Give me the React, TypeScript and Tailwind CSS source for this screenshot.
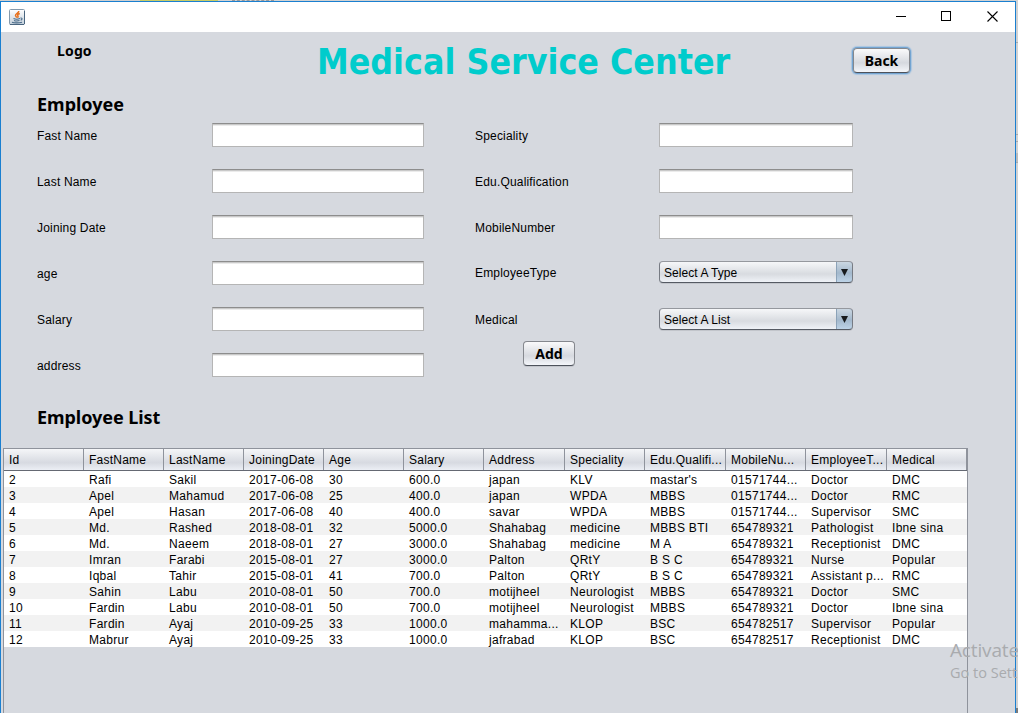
import React from "react";

const headers = ["Id", "FastName", "LastName", "JoiningDate", "Age", "Salary", "Address", "Speciality", "Edu.Qualifi...", "MobileNu...", "EmployeeT...", "Medical"];

const employees = [
  ["2", "Rafi", "Sakil", "2017-06-08", "30", "600.0", "japan", "KLV", "mastar's", "01571744...", "Doctor", "DMC"],
  ["3", "Apel", "Mahamud", "2017-06-08", "25", "400.0", "japan", "WPDA", "MBBS", "01571744...", "Doctor", "RMC"],
  ["4", "Apel", "Hasan", "2017-06-08", "40", "400.0", "savar", "WPDA", "MBBS", "01571744...", "Supervisor", "SMC"],
  ["5", "Md.", "Rashed", "2018-08-01", "32", "5000.0", "Shahabag", "medicine", "MBBS BTI", "654789321", "Pathologist", "Ibne sina"],
  ["6", "Md.", "Naeem", "2018-08-01", "27", "3000.0", "Shahabag", "medicine", "M A", "654789321", "Receptionist", "DMC"],
  ["7", "Imran", "Farabi", "2015-08-01", "27", "3000.0", "Palton", "QRtY", "B S C", "654789321", "Nurse", "Popular"],
  ["8", "Iqbal", "Tahir", "2015-08-01", "41", "700.0", "Palton", "QRtY", "B S C", "654789321", "Assistant p...", "RMC"],
  ["9", "Sahin", "Labu", "2010-08-01", "50", "700.0", "motijheel", "Neurologist", "MBBS", "654789321", "Doctor", "SMC"],
  ["10", "Fardin", "Labu", "2010-08-01", "50", "700.0", "motijheel", "Neurologist", "MBBS", "654789321", "Doctor", "Ibne sina"],
  ["11", "Fardin", "Ayaj", "2010-09-25", "33", "1000.0", "mahamma...", "KLOP", "BSC", "654782517", "Supervisor", "Popular"],
  ["12", "Mabrur", "Ayaj", "2010-09-25", "33", "1000.0", "jafrabad", "KLOP", "BSC", "654782517", "Receptionist", "DMC"],
];

const columns = "grid grid-cols-[80px_80px_80px_80px_80px_80px_81px_80px_81px_80px_81px_80px]";
const heading = "font-['Noto_Sans',sans-serif] font-bold";

function JavaIcon() {
  return (
    <svg width="16" height="16" viewBox="0 0 16 16" fill="none">
      <defs>
        <linearGradient id="tile" x1="0" y1="0" x2="0" y2="1">
          <stop offset="0" stopColor="#ffffff" />
          <stop offset="1" stopColor="#c3cfda" />
        </linearGradient>
      </defs>
      <rect x=".5" y=".5" width="15" height="15" rx="1" fill="url(#tile)" stroke="#8399ac" />
      <path d="M1 15.500h14M15.500 2v13" stroke="#49657f" />
      <path d="M9.800 2C10 4 6.300 4.600 6.500 6.500c.1 1 1.200 1.300 1.300 2.200M10.800 4.500C8 5.500 8.600 6.300 9 7c.3.6 0 1.200-.5 1.600" stroke="#e8701c" strokeWidth="1.500" />
      <path d="M4.500 9.500c1.500.7 5 .6 6.500.1M5 11.500c1.500.6 4 .6 5.500.1M11.500 9c2-.4 2 1.700.2 2.300M3 13.200c2 .9 7.500.8 10 0" stroke="#4a6b89" strokeWidth="1.100" />
    </svg>
  );
}

function Label({ children }: { children: string }) {
  return <label className="block h-6 pt-px text-[12px] leading-6 tracking-[0.18px]">{children}</label>;
}

function TextField() {
  return (
    <div className="h-6 border border-[#b5b5b5] border-t-[#8d8d8d] bg-white">
      <div className="h-px bg-[#c9c9c9]" />
      <div className="h-px bg-[#ebebeb]" />
    </div>
  );
}

function Combo({ children }: { children: string }) {
  return (
    <div className="flex h-[22px] overflow-hidden rounded-[4px] border border-[#777b83] border-t-[#95989e] border-b-[#555a63] bg-linear-to-b from-[#f6f7f9] via-[#d8dbe0] via-60% to-[#eff2f7] shadow-[0_1px_0_#c2c5cb]">
      <span className="flex-1 pl-1 text-[12px] leading-[22px] tracking-[0.06px]">{children}</span>
      <span className="-mt-px -mr-px flex h-[22px] w-[17px] items-center justify-center rounded-r-[4px] border border-[#526e88] border-l-[#8ba2b8] border-b-[#2e4a64] bg-linear-to-b from-[#cbd7e2] via-[#a3b8cc] via-55% to-[#bdd3e7]">
        <svg width="7" height="7" viewBox="0 0 7 7"><path d="M0 0h7L3.500 7z" fill="#171a1d" /></svg>
      </span>
    </div>
  );
}

const buttonFill = "border border-[#85888e] border-b-[#4d525b] bg-linear-to-b from-[#fafafb] via-[#d6d9df] via-60% to-[#f4f6fa]";

export default function App() {
  return (
    <div className="relative h-[713px] w-[1018px] overflow-hidden bg-[#d2d2d2] pt-px font-['Liberation_Sans',sans-serif] text-black">
      <div className="absolute top-0 left-0 flex h-px w-full">
        <div className="w-[140px] bg-[#cfcfcf]" />
        <div className="w-[78px] bg-[#c9cc65]" />
        <div className="ml-[14px] w-[42px] border-t border-dashed border-[#999]" />
      </div>
      <div className="absolute top-[42px] right-0 h-px w-[2px] bg-[#aaa]" />
      <div className="absolute top-[134px] right-0 h-[8px] w-[2px] border-y border-[#aaa]" />
      <div className="absolute top-[153px] right-0 h-[10px] w-[2px] border-b border-[#aaa] bg-[#bcbcbc]" />
      <div className="absolute top-[708px] right-0 h-[5px] w-[2px] bg-[#7b7b7b]" />

      <div className="flex h-[712px] w-[1016px] flex-col border border-b-0 border-[#1a7fd0] bg-[#d6d9df]">
        <header className="flex h-[30px] shrink-0 items-center bg-white pl-2">
          <JavaIcon />
          <div className="ml-auto flex h-full items-center pr-[17px]">
            <svg className="-mt-px mr-[34px]" width="11" height="11" viewBox="0 0 11 11" shapeRendering="crispEdges"><path d="M0 5h10v1H0z" fill="#000" /></svg>
            <svg className="-mt-px mr-[35px]" width="11" height="11" viewBox="0 0 11 11" shapeRendering="crispEdges"><path d="M.5.5h9v9h-9z" fill="none" stroke="#000" /></svg>
            <svg className="-mt-px" width="11" height="11" viewBox="0 0 11 11"><path d="M.5.5l10 10M10.500.5l-10 10" stroke="#000" strokeWidth="1.100" /></svg>
          </div>
        </header>

        <div className="flex h-[58px] shrink-0">
          <span className={`${heading} mt-[9px] ml-14 w-[260px] text-[14px] leading-5 tracking-[0.15px]`}>Logo</span>
          <h1 className="mt-[6px] w-[536px] origin-left scale-x-[0.885] font-['DejaVu_Sans',sans-serif] text-[36px] leading-[48px] font-bold whitespace-nowrap text-[#00cccc]">Medical Service Center</h1>
          <button className={`${heading} ${buttonFill} mt-[16px] h-[25px] w-[57px] rounded-[4px] text-[14px] leading-[22px] shadow-[0_0_0_1px_#73a4d1,0_0_1px_2px_#a9c5e0]`}>Back</button>
        </div>

        <h2 className={`${heading} ml-9 h-[33px] shrink-0 text-[18px] leading-7`}>Employee</h2>

        <div className="flex h-[292px] shrink-0 pl-9">
          <div className="grid h-[276px] w-[387px] grid-cols-[175px_212px] auto-rows-[46px]">
            {["Fast Name", "Last Name", "Joining Date", "age", "Salary", "address"].map((name) => (
              <React.Fragment key={name}>
                <Label>{name}</Label>
                <TextField />
              </React.Fragment>
            ))}
          </div>
          <div className="ml-[51px] w-[378px]">
            <div className="grid grid-cols-[184px_194px] grid-rows-[46px_46px_46px_47px_33px]">
              <Label>Speciality</Label>
              <TextField />
              <Label>Edu.Qualification</Label>
              <TextField />
              <Label>MobileNumber</Label>
              <TextField />
              <div className="-mt-px"><Label>EmployeeType</Label></div>
              <Combo>Select A Type</Combo>
              <div className="-mt-px"><Label>Medical</Label></div>
              <Combo>Select A List</Combo>
            </div>
            <button className={`${heading} ${buttonFill} ml-12 h-[25px] w-[52px] rounded-[4px] text-[14px] leading-[23px] shadow-[0_1px_0_#c2c5cb]`}>Add</button>
          </div>
        </div>

        <h2 className={`${heading} -mt-[12px] ml-9 h-[45px] shrink-0 text-[18px] leading-7 tracking-[-0.05px]`}>Employee List</h2>

        <div className="ml-[2px] w-[965px] flex-1 border border-b-0 border-[#8f939c] text-[12px] tracking-[0.3px]">
          <div className={`${columns} h-[22px] border-b border-[#656973] bg-linear-to-b from-[#f5f6f8] via-[#d7dae1] via-65% to-[#eceff5] tracking-[0.24px]`}>
            {headers.map((h) => (
              <span key={h} className="overflow-hidden border-r border-[#8f939c] pl-[5px] leading-[22px] whitespace-nowrap">{h}</span>
            ))}
          </div>
          {employees.map((row) => (
            <div key={row[0]} className={`${columns} h-4 even:bg-white odd:bg-[#f2f2f2]`}>
              {row.map((cell, i) => (
                <span key={i} className="h-4 pt-px pl-[5px] leading-[17px] whitespace-nowrap">{cell}</span>
              ))}
            </div>
          ))}
        </div>
      </div>

      <div className="absolute top-[638px] left-[950px] font-['Open_Sans',sans-serif] whitespace-nowrap text-[#a9abae]">
        <div className="text-[19px] leading-6 tracking-[-0.15px]">Activate</div>
        <div className="text-[14.5px] leading-[21px]">Go to Sett</div>
      </div>
    </div>
  );
}
